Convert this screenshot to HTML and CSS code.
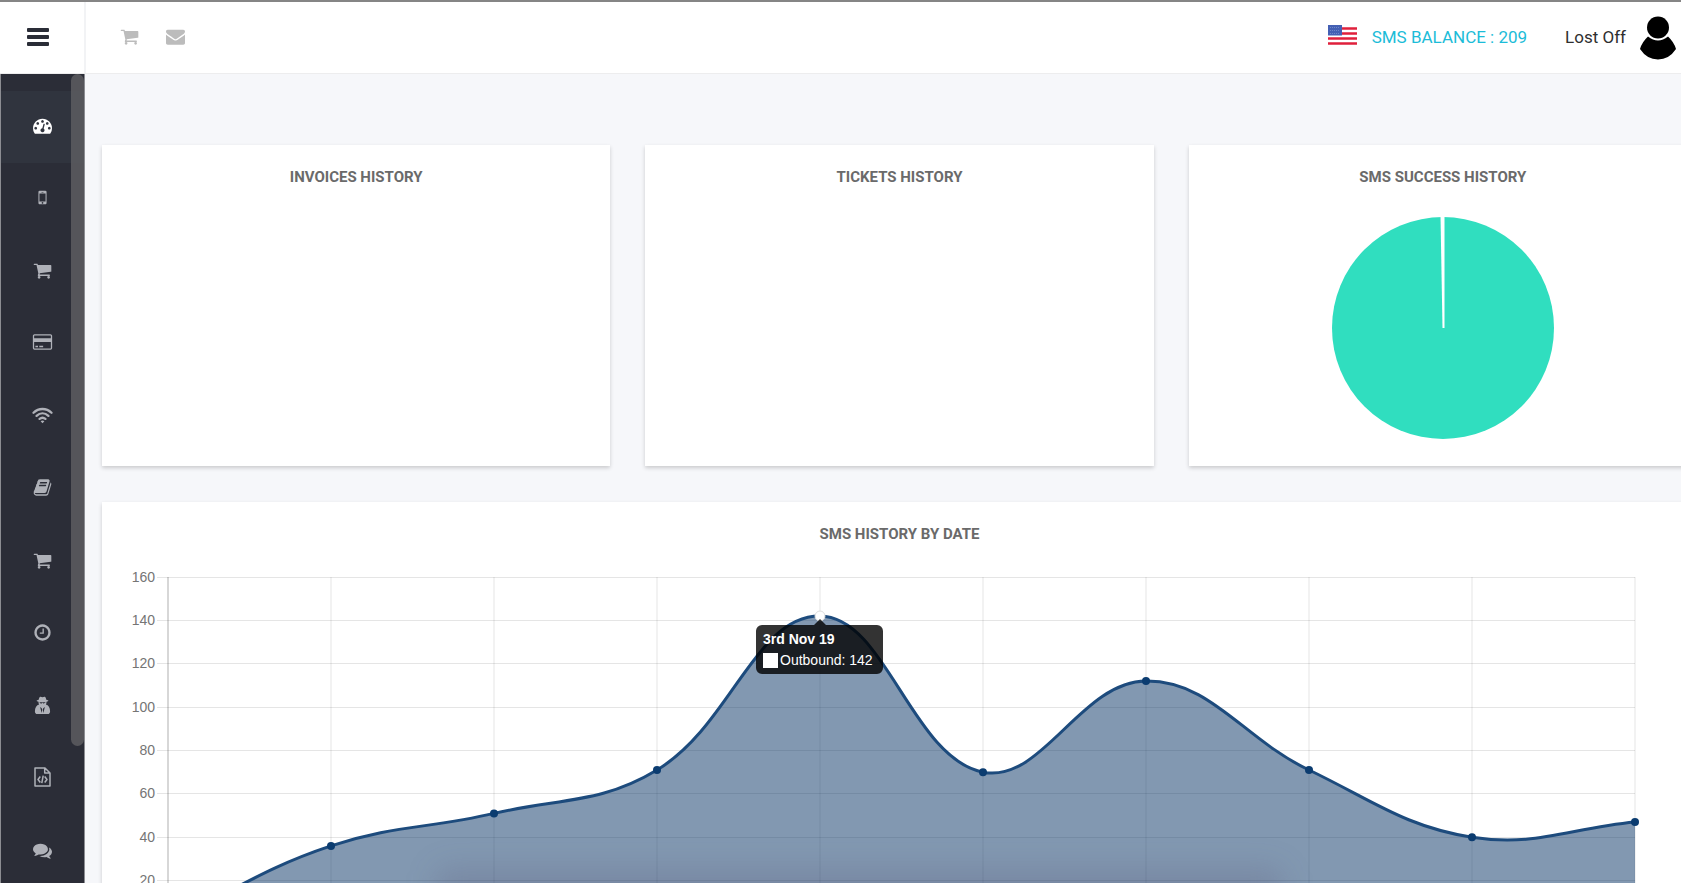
FILE: index.html
```html
<!DOCTYPE html>
<html lang="en">
<head>
<meta charset="utf-8">
<title>Dashboard</title>
<link rel="stylesheet" href="styles.css">
</head>
<body>
<svg class="sprite" aria-hidden="true">
  <symbol id="cart" viewBox="0 0 1792 1792"><path d="M704 1536q0 52-38 90t-90 38-90-38-38-90 38-90 90-38 90 38 38 90zm896 0q0 52-38 90t-90 38-90-38-38-90 38-90 90-38 90 38 38 90zm128-1088v512q0 24-16.500 42.500t-40.500 21.500l-1044 122q13 60 13 70 0 16-24 64h920q26 0 45 19t19 45-19 45-45 19h-1024q-26 0-45-19t-19-45q0-11 8-31.500t16-36 21.500-40 15.500-29.500l-177-823h-204q-26 0-45-19t-19-45 19-45 45-19h256q16 0 28.500 6.500t19.500 15.500 13 24.500 8 26 5.500 29.500 4.500 26h1201q26 0 45 19t19 45z"/></symbol>
  <symbol id="mail" viewBox="0 0 1792 1792"><path d="M1792 710v794q0 66-47 113t-113 47h-1472q-66 0-113-47t-47-113v-794q44 49 101 87 362 246 497 345 57 42 92.500 65.500t94.500 48 110 24.500h2q51 0 110-24.500t94.500-48 92.500-65.500q170-123 498-345 57-39 100-87zm0-294q0 79-49 151t-122 123q-376 261-468 325-10 7-42.500 31t-54 38.500-52 32.500-57.500 27-50 9h-2q-23 0-50-9t-57.500-27-52-32.500-54-38.500-42.500-31q-91-64-262-182.500t-205-142.500q-62-42-117-115.500t-55-136.500q0-78 41.500-130t118.500-52h1472q65 0 112.500 47t47.500 113z"/></symbol>
  <symbol id="gauge" viewBox="0 0 1792 1792"><path d="M384 1152q0-53-37.500-90.500t-90.500-37.500-90.500 37.500-37.500 90.500 37.500 90.500 90.500 37.500 90.500-37.500 37.500-90.500zm192-448q0-53-37.500-90.500t-90.500-37.500-90.500 37.500-37.500 90.500 37.500 90.500 90.500 37.500 90.500-37.500 37.500-90.500zm428 481l101-382q6-26-7.500-48.500t-38.500-29.500-48 6.500-30 39.500l-101 382q-60 5-107 43.500t-63 98.500q-20 77 20 146t117 89 146-20 89-117q16-60-6-117t-72-91zm660-33q0-53-37.500-90.500t-90.500-37.500-90.500 37.500-37.500 90.500 37.500 90.500 90.500 37.500 90.500-37.500 37.500-90.500zm-640-640q0-53-37.500-90.500t-90.500-37.500-90.500 37.500-37.500 90.500 37.500 90.500 90.500 37.500 90.500-37.500 37.500-90.500zm448 192q0-53-37.500-90.500t-90.500-37.500-90.500 37.500-37.500 90.500 37.500 90.500 90.500 37.500 90.500-37.500 37.500-90.500zm320 448q0 261-141 483-19 29-54 29h-1402q-35 0-54-29-141-221-141-483 0-182 71-348t191-286 286-191 348-71 348 71 286 191 191 286 71 348z"/></symbol>
  <symbol id="mobile" viewBox="0 0 1792 1792"><path d="M976 1408q0-33-23.500-56.500t-56.500-23.500-56.500 23.500-23.500 56.500 23.500 56.500 56.500 23.500 56.500-23.500 23.500-56.500zm208-160v-704q0-13-9.500-22.500t-22.500-9.500h-512q-13 0-22.500 9.500t-9.500 22.500v704q0 13 9.500 22.500t22.500 9.500h512q13 0 22.500-9.500t9.500-22.500zm-192-848q0-16-16-16h-160q-16 0-16 16t16 16h160q16 0 16-16zm288-16v1024q0 52-38 90t-90 38h-512q-52 0-90-38t-38-90v-1024q0-52 38-90t90-38h512q52 0 90 38t38 90z"/></symbol>
  <symbol id="card" viewBox="0 0 1920 1792"><path d="M1760 128q66 0 113 47t47 113v1216q0 66-47 113t-113 47h-1600q-66 0-113-47t-47-113v-1216q0-66 47-113t113-47h1600zm-1600 128q-13 0-22.500 9.500t-9.500 22.500v224h1664v-224q0-13-9.500-22.500t-22.500-9.500h-1600zm1600 1280q13 0 22.500-9.500t9.500-22.500v-608h-1664v608q0 13 9.500 22.500t22.500 9.500h1600zm-1504-128v-128h256v128h-256zm384 0v-128h384v128h-384z"/></symbol>
  <symbol id="wifi" viewBox="0 0 21 18"><g fill="none" stroke="currentColor" stroke-width="2.300" stroke-linecap="round"><path d="M1.500 6.800C6.700 1.700 14.300 1.700 19.500 6.800M4.600 9.900C8.100 6.600 12.900 6.600 16.400 9.900M7.600 12.900C9.400 11.400 11.600 11.400 13.400 12.900"/></g><path d="M8.600 15.200q1.900-1.300 3.800 0l-1.900 2z"/></symbol>
  <symbol id="book" viewBox="0 0 1792 1792"><path d="M1703 478q40 57 18 129l-275 906q-19 64-76.500 107.500t-122.500 43.500h-923q-77 0-148.500-53.500t-99.500-131.500q-24-67-2-127 0-4 3-27t4-37q1-8-3-21.500t-3-19.500q2-11 8-21t16.500-23.500 16.500-23.500q23-38 45-91.500t30-91.500q3-10 .5-30t-.5-28q3-11 17-28t17-23q21-36 42-92t25-90q1-9-2.500-32t.5-28q4-13 22-30.500t22-22.500q19-26 42.500-84.500t27.500-96.500q1-8-3-25.500t-2-26.500q2-8 9-18t18-23 17-21q8-12 16.500-30.500t15-35 16-36 19.500-32 26.500-23.500 36-11.500 47.500 5.500l-1 3q38-9 51-9h761q74 0 114 56t18 130l-274 906q-36 119-71.500 153.500t-128.500 34.500h-869q-27 0-38 15-11 16-1 43 24 70 144 70h923q29 0 56-15.500t35-41.500l300-987q7-22 5-57 38 15 59 43zm-1064 2q-4 13 2 22.500t20 9.500h608q13 0 25.500-9.500t16.500-22.500l21-64q4-13-2-22.500t-20-9.500h-608q-13 0-25.500 9.500t-16.500 22.500zm-83 256q-4 13 2 22.500t20 9.500h608q13 0 25.500-9.500t16.500-22.500l21-64q4-13-2-22.500t-20-9.500h-608q-13 0-25.500 9.500t-16.500 22.500z"/></symbol>
  <symbol id="clock" viewBox="0 0 1792 1792"><path d="M1024 544v448q0 14-9 23t-23 9h-320q-14 0-23-9t-9-23v-64q0-14 9-23t23-9h224v-352q0-14 9-23t23-9h64q14 0 23 9t9 23zm416 352q0-148-73-273t-198-198-273-73-273 73-198 198-73 273 73 273 198 198 273 73 273-73 198-198 73-273zm224 0q0 209-103 385.500t-279.500 279.500-385.500 103-385.500-103-279.500-279.500-103-385.500 103-385.500 279.500-279.500 385.500-103 385.500 103 279.500 279.500 103 385.500z"/></symbol>
  <symbol id="spy" viewBox="0 0 18 20"><path fill-rule="evenodd" d="M6.200 1C7 .4 8 1.200 9 1.200S11 .4 11.800 1c.7.600 1 2 1.200 3 1.200.2 2.200.6 2.200 1 0 .5-.8.800-2 1 .1 1.200-.1 2.200-.6 3 2.600.6 4.400 3.300 4.400 7 0 1.900-.9 3-2.500 3H3.500C1.900 19 1 17.900 1 16c0-3.700 1.800-6.400 4.400-7-.5-.8-.7-1.800-.6-3-1.200-.2-2-.5-2-1 0-.4 1-.8 2.200-1 .2-1 .5-2.400 1.200-3zM5.900 6.700c.2 1.500 2.400 1.700 2.900.3h.4c.5 1.400 2.700 1.200 2.900-.3zM6.500 11.500l1.600 6.500.6-3.500-.5-1.500zM11.500 11.500L9.900 18l-.6-3.500.5-1.500z"/></symbol>
  <symbol id="code" viewBox="0 0 18 20"><g fill="none" stroke="currentColor" stroke-width="1.500" stroke-linejoin="round"><path d="M1.500 1h10L16.500 6V19h-15zM11.200 1v5H16.500"/><path d="M6.800 9.500L4.500 12.500l2.300 3M11.200 9.500l2.300 3-2.300 3M9.700 8.700l-1.400 7.500"/></g></symbol>
  <symbol id="chat" viewBox="0 0 1792 1792"><path d="M1408 768q0 139-94 257t-256.500 186.500-353.500 68.500q-86 0-176-16-124 88-278 128-36 9-86 16h-3q-11 0-20.500-8t-11.500-21q-1-3-1-6.500t.5-6.500 2-6l2.500-5 3.500-5.500 4-5 4.500-5 4-4.500q5-6 23-25t26-29.500 22.500-29 25-38.500 20.500-44q-124-72-195-177t-71-224q0-139 94-257t256.500-186.500 353.500-68.500 353.500 68.500 256.500 186.500 94 257zm384 256q0 120-71 224.500t-195 176.500q10 24 20.500 44t25 38.500 22.500 29 26 29.500 23 25q1 1 4 4.500t4.500 5 4 5 3.500 5.500l2.500 5 2 6 .5 6.500-1 6.500q-3 14-13 22t-22 7q-50-7-86-16-154-40-278-128-90 16-176 16-271 0-472-132 58 4 88 4 161 0 309-45t264-129q125-92 192-212t67-254q0-77-23-152 129 71 204 178t75 230z"/></symbol>
</svg>

<header class="topbar">
  <button class="menu-button" type="button" aria-label="Menu"><span class="bar"></span><span class="bar"></span><span class="bar"></span></button>
  <nav class="quick" aria-label="Shortcuts">
    <a href="#" aria-label="Orders"><svg class="icon"><use href="#cart"/></svg></a>
    <a href="#" aria-label="Messages"><svg class="icon"><use href="#mail"/></svg></a>
  </nav>
  <div class="account">
    <a class="language" href="#" aria-label="English (US)">
      <svg class="flag" viewBox="0 0 29 20"><path fill="#fff" d="M0 0h29v20H0z"/><path stroke="#e0203c" stroke-width="2.500" d="M14 3.500h15M14 8.500h15M0 13.500h29M0 18.500h29"/><path fill="#4460b4" d="M0 0h14v10.500H0z"/><path stroke="#6f86c8" stroke-dasharray="1 1" d="M2 2.500h10M2 5.500h10M2 8.500h10"/></svg>
    </a>
    <a class="balance" href="#">SMS BALANCE : 209</a>
    <a class="user" href="#">Lost Off
      <svg class="avatar" viewBox="0 0 36 44"><circle cx="18" cy="11.500" r="11"/><path d="M8 20.500Q18 28.500 28 20.500Q34 26 36 33Q29 43.500 18 43.500T0 33Q2 26 8 20.500z"/></svg>
    </a>
  </div>
</header>

<div class="layout">
  <aside class="sidebar">
    <nav class="side-nav" aria-label="Main">
      <a class="active" href="#" aria-label="Dashboard"><svg class="icon"><use href="#gauge"/></svg></a>
      <a href="#" aria-label="Phones"><svg class="icon"><use href="#mobile"/></svg></a>
      <a href="#" aria-label="Orders"><svg class="icon"><use href="#cart"/></svg></a>
      <a href="#" aria-label="Payments"><svg class="icon wide"><use href="#card"/></svg></a>
      <a href="#" aria-label="Network"><svg class="icon wide"><use href="#wifi"/></svg></a>
      <a href="#" aria-label="Contacts"><svg class="icon"><use href="#book"/></svg></a>
      <a href="#" aria-label="Shop"><svg class="icon"><use href="#cart"/></svg></a>
      <a href="#" aria-label="History"><svg class="icon"><use href="#clock"/></svg></a>
      <a href="#" aria-label="Privacy"><svg class="icon"><use href="#spy"/></svg></a>
      <a href="#" aria-label="API"><svg class="icon tall"><use href="#code"/></svg></a>
      <a href="#" aria-label="Chat"><svg class="icon"><use href="#chat"/></svg></a>
    </nav>
    <div class="thumb"></div>
  </aside>

  <main class="content">
    <section class="cards">
      <article class="panel"><h2>INVOICES HISTORY</h2></article>
      <article class="panel"><h2>TICKETS HISTORY</h2></article>
      <article class="panel"><h2>SMS SUCCESS HISTORY</h2>
        <svg class="pie" viewBox="0 0 224 224" role="img" aria-label="SMS success"><circle cx="112" cy="112" r="111" fill="#30debf"/><path fill="#fff" d="M109.500 0h4V112h-2z"/></svg>
      </article>
    </section>
    <section class="panel history"><h2>SMS HISTORY BY DATE</h2>
      <svg class="chart" id="chart" viewBox="0 0 1595 420" role="img" aria-label="SMS history by date">
        <defs><filter id="soft" x="-20%" y="-100%" width="140%" height="300%" color-interpolation-filters="sRGB"><feGaussianBlur stdDeviation="15"/></filter></defs>
        <g id="grid"></g>
        <g id="series"></g>
        <g class="tooltip">
          <path d="M660 56h52l6-6 6 6h51a6 6 0 0 1 6 6v37a6 6 0 0 1-6 6H660a6 6 0 0 1-6-6V62a6 6 0 0 1 6-6z"/>
          <rect x="661" y="84" width="15" height="15"/>
          <text class="tip-title" x="661" y="75">3rd Nov 19</text>
          <text x="678" y="96">Outbound: 142</text>
        </g>
      </svg>
    </section>
  </main>
</div>
<script src="chart.js"></script>
</body>
</html>
```
FILE: chart.js
```js
const NS = "http://www.w3.org/2000/svg";
const values = [1, 36, 51, 71, 142, 70, 112, 71, 40, 47];
const left = 66, step = 163, top160 = 8, base = 355, tension = 0.4;
const yOf = v => base - v * (base - top160) / 160;

function add(parent, name, attrs, text) {
  const el = document.createElementNS(NS, name);
  for (const key in attrs) el.setAttribute(key, attrs[key]);
  if (text !== undefined) el.textContent = text;
  document.getElementById(parent).appendChild(el);
}

for (let v = 0; v <= 160; v += 20) {
  const y = Math.floor(yOf(v));
  add("grid", "path", { class: "grid-line", d: `M${left - 11} ${y + 0.5}H${left + step * 9}` });
  add("grid", "text", { class: "tick", x: left - 13, y: y + 5 }, v);
}
values.forEach((v, i) => {
  add("grid", "path", { class: i ? "grid-line" : "grid-line axis", d: `M${left + step * i} ${top160}V${base}` });
});

// Smooth curve through the points, with control points scaled by neighbour distance.
const pts = values.map((v, i) => [left + step * i, yOf(v)]);
const ctrl = pts.map((p, i) => {
  const a = pts[i - 1] || p, b = pts[i + 1] || p;
  const d1 = Math.hypot(p[0] - a[0], p[1] - a[1]);
  const d2 = Math.hypot(b[0] - p[0], b[1] - p[1]);
  const f1 = tension * d1 / (d1 + d2), f2 = tension * d2 / (d1 + d2);
  const dx = b[0] - a[0], dy = b[1] - a[1];
  return { before: [p[0] - f1 * dx, p[1] - f1 * dy], after: [p[0] + f2 * dx, p[1] + f2 * dy] };
});
let line = `M${pts[0]}`;
for (let i = 1; i < pts.length; i++) line += `C${ctrl[i - 1].after} ${ctrl[i].before} ${pts[i]}`;

add("series", "path", { class: "area", d: `${line}V${base}H${left}Z` });
add("series", "rect", { class: "shade", x: 335, y: 300, width: 845, height: 90, rx: 10, filter: "url(#soft)" });
add("series", "path", { class: "line", d: line });
pts.forEach((p, i) => {
  add("series", "circle", { class: i === 4 ? "dot hover" : "dot", cx: p[0], cy: p[1], r: i === 4 ? 5 : 4 });
});
```
FILE: styles.css
```css
* { box-sizing: border-box; }
html, body { height: 100%; }
body {
  margin: 0;
  display: flex;
  flex-direction: column;
  overflow: hidden;
  background: #f6f7fa;
  color: #2f2f2f;
  font-family: Roboto, "Liberation Sans", sans-serif;
  font-size: 17px;
}
a { color: inherit; text-decoration: none; }
.sprite { position: absolute; width: 0; height: 0; }
.icon { display: block; width: 19px; height: 19px; fill: currentColor; }
.icon.wide { width: 21px; height: 18px; }
.icon.tall { height: 20px; }

.topbar {
  flex: none;
  display: flex;
  height: 74px;
  padding-bottom: 2px;
  border-top: 2px solid #858585;
  border-bottom: 1px solid #ededee;
  background: #fff;
}
.menu-button {
  width: 86px;
  margin-bottom: -2px;
  padding: 0 0 2px 27px;
  border: 0;
  border-right: 2px solid #f2f3f5;
  background: none;
  display: flex;
  flex-direction: column;
  justify-content: center;
  gap: 3px;
}
.bar { width: 22px; height: 4px; border-radius: 1px; background: #2a2d37; }
.quick { display: flex; align-items: center; gap: 27px; padding-left: 34px; color: #bcbcbc; }
.account { margin-left: auto; display: flex; align-items: center; padding-right: 5px; }
.language { padding-bottom: 3px; }
.flag { display: block; width: 29px; height: 20px; }
.balance { margin-left: 15px; color: #1cbcd8; }
.user { display: flex; align-items: center; gap: 14px; margin-left: 38px; }
.avatar { width: 36px; height: 44px; margin-top: 2px; }

.layout { flex: 1; min-height: 0; display: flex; }
.sidebar {
  position: relative;
  flex: none;
  width: 85px;
  border: solid #8c8d92;
  border-width: 0 1px;
  background: #2b2d37;
  overflow: hidden;
}
.side-nav { padding-top: 17px; display: flex; flex-direction: column; }
.side-nav a { flex: none; height: 72px; padding-bottom: 4px; display: flex; align-items: center; justify-content: center; color: #afb1b8; }
.side-nav a:nth-child(even) { margin-bottom: 1px; }
.side-nav .active { background: #30343e; color: #fff; }
.thumb { position: absolute; top: 0; right: 0; width: 13px; height: 672px; border-radius: 7px; background: #5a5a5ee6; }

.content { flex: 1; min-width: 0; margin-right: -32px; padding: 71px 16px 0 17px; }
.cards { display: grid; grid-template-columns: repeat(3, 1fr); gap: 35px; margin-bottom: 36px; }
.cards .panel { height: 321px; }
.panel { background: #fff; box-shadow: 0 2px 4px #0000002e; padding-top: 20px; }
.panel h2 { margin: 0; text-align: center; font-size: 15px; line-height: 24px; font-weight: 700; color: #6a6a6a; }
.pie { display: block; width: 224px; margin: 27px auto 0; }
.chart { display: block; width: 100%; margin-top: 23px; }
.tick { font: 14px "Liberation Sans", sans-serif; fill: #757575; text-anchor: end; }
.grid-line { stroke: #0000001a; stroke-width: 1; }
.axis { stroke: #00000050; stroke-width: 1; }
.area { fill: #053264; fill-opacity: .5; }
.shade { fill: #50446a; fill-opacity: .2; }
.line { fill: none; stroke: #1d4b7d; stroke-width: 3; }
.dot { fill: #0b3c70; }
.dot.hover { fill: #fff; stroke: #ddd; stroke-width: 1; }
.tooltip path { fill: #000c; }
.tooltip rect { fill: #fff; }
.tooltip text { font: 14px "Liberation Sans", sans-serif; fill: #fff; }
.tooltip .tip-title { font-weight: 700; }
```
